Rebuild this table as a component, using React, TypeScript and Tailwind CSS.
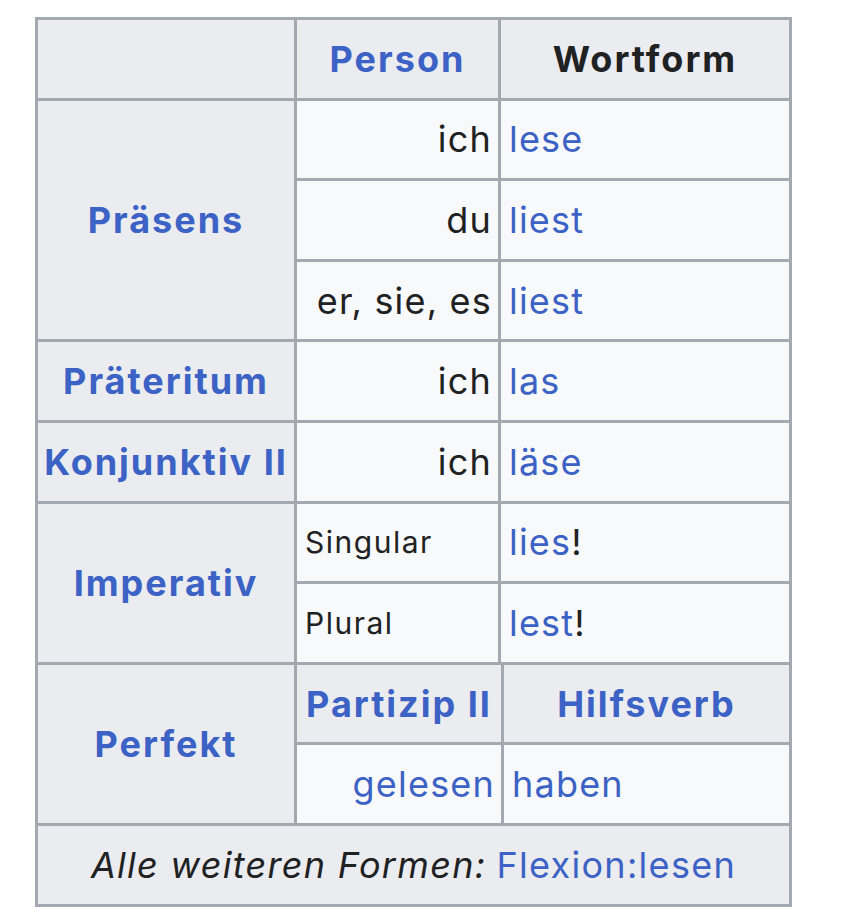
import React from "react";

const Link = ({ children }: { children: React.ReactNode }) => (
  <span className="text-[#3b62c4]">{children}</span>
);

export default function App() {
  const th =
    "bg-[#eaecf0] flex items-center justify-center font-bold tracking-[2px] text-[#3b62c4] px-1";
  const td = "bg-[#f8f9fa] flex items-center px-2 tracking-[1.2px]";
  const small = " text-[30px] tracking-[1.5px]";
  return (
    <div
      className="min-h-[916px] w-[853px] bg-white pt-[17px] pl-[35px] text-[#202122] text-[36px] leading-none"
      style={{ fontFamily: "Inter, 'Noto Sans', 'Liberation Sans', sans-serif" }}
    >
      <div className="grid w-[757px] grid-cols-[256px_201px_0px_285px] auto-rows-[77.6px] gap-[3px] border-[3px] border-[#a2a9b1] bg-[#a2a9b1]">
        {/* header */}
        <div className={th}></div>
        <div className={th}>Person</div>
        <div className={th + " col-span-2 text-[#202122]"}>Wortform</div>

        {/* Präsens */}
        <div className={th + " row-span-3"}>Präsens</div>
        <div className={td + " justify-end pr-[6px]"}>ich</div>
        <div className={td + " col-span-2"}><Link>lese</Link></div>
        <div className={td + " justify-end pr-[6px]"}>du</div>
        <div className={td + " col-span-2"}><Link>liest</Link></div>
        <div className={td + " justify-end pr-[6px]"}>er, sie, es</div>
        <div className={td + " col-span-2"}><Link>liest</Link></div>

        {/* Präteritum */}
        <div className={th}>Präteritum</div>
        <div className={td + " justify-end pr-[6px]"}>ich</div>
        <div className={td + " col-span-2"}><Link>las</Link></div>

        {/* Konjunktiv II */}
        <div className={th + " px-0"}>Konjunktiv II</div>
        <div className={td + " justify-end pr-[6px]"}>ich</div>
        <div className={td + " col-span-2"}><Link>läse</Link></div>

        {/* Imperativ */}
        <div className={th + " row-span-2"}>Imperativ</div>
        <div className={td + small}>Singular</div>
        <div className={td + " col-span-2"}><Link>lies</Link>!</div>
        <div className={td + small}>Plural</div>
        <div className={td + " col-span-2"}><Link>lest</Link>!</div>

        {/* Perfekt */}
        <div className={th + " row-span-2"}>Perfekt</div>
        <div className={th + " col-span-2"}>Partizip II</div>
        <div className={th}>Hilfsverb</div>
        <div className={td + " col-span-2 justify-end pr-[6px]"}><Link>gelesen</Link></div>
        <div className={td}><Link>haben</Link></div>

        {/* footer */}
        <div className="col-span-4 bg-[#eaecf0] flex items-center justify-center px-2 tracking-[1.3px]">
          <span className="italic">Alle weiteren Formen:</span>
          <span className="ml-[10px]"><Link>Flexion:lesen</Link></span>
        </div>
      </div>
    </div>
  );
}
